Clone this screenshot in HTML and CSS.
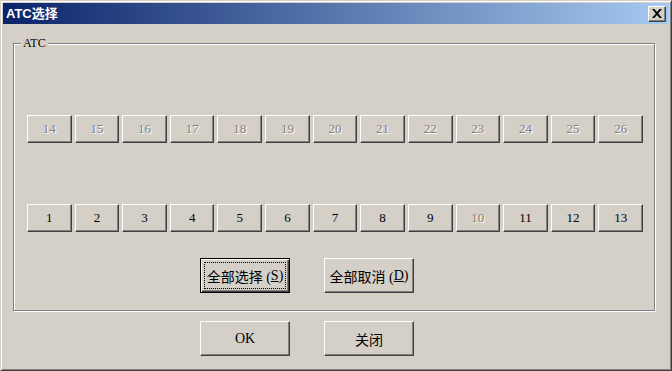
FILE: index.html
```html
<!DOCTYPE html>
<html lang="zh-CN">
<head>
<meta charset="utf-8">
<title>ATC选择</title>
<link rel="stylesheet" href="styles.css">
</head>
<body>
<div class="window">
  <div class="titlebar">
    <span class="title">ATC选择</span>
    <button class="close" aria-label="关闭">
      <svg width="10" height="9" viewBox="0 0 10 9"><path d="M0 0h2.3l2.7 3 2.7-3H10L6.2 4.5 10 9H7.7L5 6 2.3 9H0l3.8-4.5z" fill="#000"/></svg>
    </button>
  </div>
  <div class="content">
    <div class="group">
      <span class="group-label">ATC</span>
      <div class="row">
        <button class="btn num" disabled>14</button>
        <button class="btn num" disabled>15</button>
        <button class="btn num" disabled>16</button>
        <button class="btn num" disabled>17</button>
        <button class="btn num" disabled>18</button>
        <button class="btn num" disabled>19</button>
        <button class="btn num" disabled>20</button>
        <button class="btn num" disabled>21</button>
        <button class="btn num" disabled>22</button>
        <button class="btn num" disabled>23</button>
        <button class="btn num" disabled>24</button>
        <button class="btn num" disabled>25</button>
        <button class="btn num" disabled>26</button>
      </div>
      <div class="row row2">
        <button class="btn num">1</button>
        <button class="btn num">2</button>
        <button class="btn num">3</button>
        <button class="btn num">4</button>
        <button class="btn num">5</button>
        <button class="btn num">6</button>
        <button class="btn num">7</button>
        <button class="btn num">8</button>
        <button class="btn num">9</button>
        <button class="btn num" disabled>10</button>
        <button class="btn num">11</button>
        <button class="btn num">12</button>
        <button class="btn num">13</button>
      </div>
      <div class="actions">
        <button class="btn big default"><span class="focus">全部选择 (<u>S</u>)</span></button>
        <button class="btn big">全部取消 (<u>D</u>)</button>
      </div>
    </div>
    <div class="footer">
      <button class="btn big">OK</button>
      <button class="btn big">关闭</button>
    </div>
  </div>
</div>
</body>
</html>
```
FILE: styles.css
```css
* { box-sizing: border-box; }
html, body { margin: 0; padding: 0; background: #d4d0c8; }
.window {
  width: 672px;
  height: 371px;
  background: #d4d0c8;
  border: 1px solid;
  border-color: #d4d0c8 #404040 #404040 #d4d0c8;
  box-shadow: inset 1px 1px 0 #fff, inset -1px -1px 0 #808080;
  padding: 2px;
  font-family: "Liberation Serif", "Noto Sans CJK SC", serif;
  font-size: 12px;
  color: #000;
}
.titlebar {
  height: 21px;
  background: linear-gradient(to right, #0a246a, #a6caf0);
  display: flex;
  align-items: center;
  justify-content: space-between;
  padding: 0 3px 0 3px;
}
.title {
  color: #fff;
  font-family: "Liberation Sans", "Noto Sans CJK SC", sans-serif;
  font-weight: bold;
  font-size: 13px;
  line-height: 1;
}
.close {
  width: 18px;
  height: 16px;
  margin: 0;
  padding: 0;
  background: #d4d0c8;
  border: 1px solid;
  border-color: #fff #404040 #404040 #fff;
  box-shadow: inset -1px -1px 0 #808080;
  display: flex;
  align-items: center;
  justify-content: center;
}
.content {
  padding: 19px 0 0 10px;
}
.group {
  position: relative;
  width: 642px;
  height: 268px;
  border: 1px solid #808080;
  box-shadow: inset 1px 1px 0 #fff, 1px 1px 0 #fff;
  padding: 71px 11px 0 13px;
}
.group-label {
  position: absolute;
  left: 7px;
  top: -8px;
  padding: 0 2px;
  background: #d4d0c8;
  font-size: 12px;
  line-height: 14px;
}
.row {
  display: grid;
  grid-template-columns: repeat(13, 1fr);
  column-gap: 3px;
  width: 616px;
}
.row2 { margin-top: 61px; }
.btn {
  margin: 0;
  padding: 0;
  background: #d4d0c8;
  border: 1px solid;
  border-color: #fff #404040 #404040 #fff;
  box-shadow: inset -1px -1px 0 #808080;
  font-family: "Liberation Serif", "Noto Sans CJK SC", serif;
  font-size: 13px;
  color: #000;
  display: flex;
  align-items: center;
  justify-content: center;
}
.num { height: 28px; }
.btn:disabled {
  color: #808080;
  text-shadow: 1px 1px 0 #fff;
}
.actions {
  display: flex;
  gap: 34px;
  margin: 26px 0 0 173px;
}
.big {
  width: 90px;
  height: 35px;
  font-size: 14px;
}
.default {
  border: 1px solid #000;
  box-shadow: inset 1px 1px 0 #fff, inset -1px -1px 0 #404040, inset -2px -2px 0 #808080;
  padding: 3px;
  align-items: stretch;
}
.focus {
  flex: 1;
  border: 1px dotted #000;
  display: flex;
  align-items: center;
  justify-content: center;
}
u { text-decoration: underline; text-underline-offset: 1px; }
.footer {
  display: flex;
  gap: 34px;
  margin: 10px 0 0 187px;
}
```
